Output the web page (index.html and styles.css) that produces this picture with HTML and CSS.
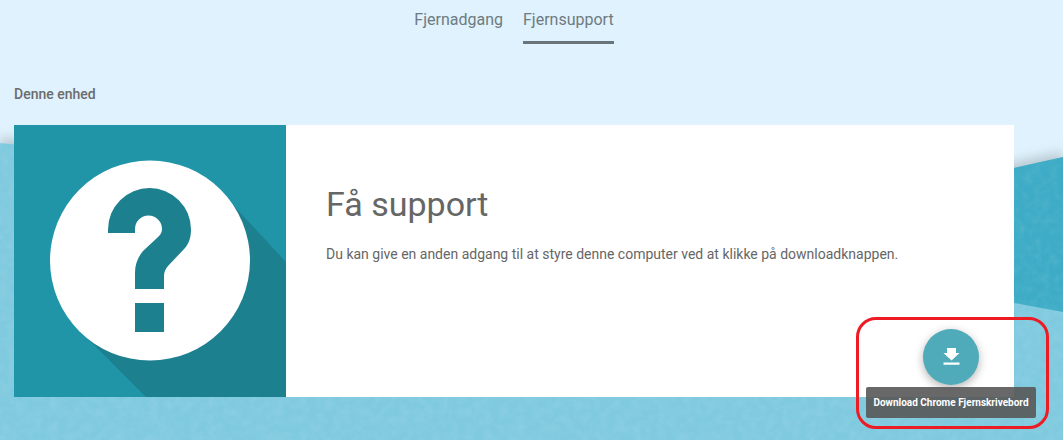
FILE: index.html
```html
<!DOCTYPE html>
<html lang="da">
<head>
<meta charset="utf-8">
<title>Chrome Fjernskrivebord</title>
<link rel="stylesheet" href="styles.css">
</head>
<body>
<svg class="backdrop" viewBox="0 0 1063 440" aria-hidden="true">
  <defs>
    <filter id="blur" x="-5%" y="-30%" width="110%" height="160%"><feGaussianBlur stdDeviation="6"/></filter>
    <filter id="grain" x="0" y="0" width="100%" height="100%">
      <feTurbulence type="fractalNoise" baseFrequency="0.12" numOctaves="4" seed="4"/>
      <feColorMatrix values="0 0 0 0 1  0 0 0 0 1  0 0 0 0 1  1.2 0 0 0 -0.45"/>
    </filter>
    <clipPath id="wave"><path d="M0 143 L286 172 L1014 168 L1063 157 V440 H0Z"/></clipPath>
  </defs>
  <rect width="1063" height="440" fill="#dff2fd"/>
  <path d="M0 138 L286 165 L1014 163 L1063 152 V190 H0Z" fill="#7b8890" opacity=".42" filter="url(#blur)"/>
  <path d="M0 143 L286 172 L1014 168 L1063 157 V440 H0Z" fill="#80cadf"/>
  <path d="M900 170 L1014 168 L1063 157 V312 L1014 303 L900 280Z" fill="#3eacc6"/>
  <g clip-path="url(#wave)"><rect width="1063" height="440" filter="url(#grain)" opacity=".13"/></g>
</svg>

<main class="page">
  <nav class="tabs">
    <a class="tab">Fjernadgang</a>
    <a class="tab tab-active">Fjernsupport</a>
  </nav>

  <h2 class="section-label">Denne enhed</h2>

  <section class="card">
    <div class="card-art">
      <svg class="art-svg" viewBox="14 125 272 272" aria-hidden="true">
        <rect x="14" y="125" width="272" height="272" fill="#2095a8"/>
        <path d="M233 205 L286 262 V397 H146 L87 338Z" fill="#1c808f"/>
        <circle cx="150" cy="260.5" r="100" fill="#fff"/>
        <path d="M108 233 V229.5 A41.5 41.5 0 0 1 191 229.5 C191 238 188.500 244 185 248 L168 266 C165.500 269 164 272 164 276 V289 H135 V273 C135 264 138 257 143 251 L157 238 C160 235 162 233 162 229 A13.500 13.500 0 0 0 135 229 V233Z M135 303 H164 V332 H135Z" fill="#1c808f"/>
      </svg>
    </div>
    <div class="card-body">
      <h1 class="card-title">Få support</h1>
      <p class="card-text">Du kan give en anden adgang til at styre denne computer ved at klikke på downloadknappen.</p>
    </div>
  </section>
</main>

<button class="fab" aria-label="Download Chrome Fjernskrivebord">
  <svg class="fab-icon" viewBox="0 0 24 24" aria-hidden="true"><path d="M8 3h9v5h3.500L12.500 15.500 4.500 8H8zM4.500 17.500h16v2.200h-16z" fill="#fff"/></svg>
</button>
<div class="tooltip">Download Chrome Fjernskrivebord</div>
<div class="callout"></div>
</body>
</html>
```
FILE: styles.css
```css
html, body {
  margin: 0;
  padding: 0;
  height: 440px;
  overflow: hidden;
}
body {
  position: relative;
  font-family: Roboto, "Liberation Sans", sans-serif;
  color: #666;
}
.backdrop {
  position: absolute;
  inset: 0;
  width: 1063px;
  height: 440px;
  display: block;
}
.page {
  position: relative;
  width: 1000px;
  margin-left: 14px;
}
.tabs {
  display: flex;
  justify-content: center;
  gap: 20px;
  height: 44px;
}
.tab {
  box-sizing: border-box;
  height: 44px;
  padding-top: 10px;
  font-size: 16px;
  line-height: 20px;
  color: #6e7b81;
}
.tab-active {
  border-bottom: 3px solid #69757b;
}
.section-label {
  margin: 0;
  padding-top: 42px;
  height: 39px;
  font-size: 14px;
  line-height: 17px;
  font-weight: 500;
  color: #6b6b6b;
}
.card {
  display: flex;
  height: 272px;
  background: #fff;
}
.card-art {
  flex: 0 0 272px;
  height: 272px;
}
.art-svg {
  display: block;
  width: 272px;
  height: 272px;
}
.card-body {
  padding: 57px 40px 0;
}
.card-title {
  margin: 0;
  font-size: 34px;
  line-height: 44px;
  font-weight: 400;
  color: #666;
}
.card-text {
  margin: 18px 0 0;
  font-size: 14px;
  line-height: 20px;
  color: #666;
}
.fab {
  position: absolute;
  left: 923px;
  top: 329px;
  width: 56px;
  height: 56px;
  padding: 0;
  border: 0;
  border-radius: 50%;
  background: #4fabb9;
  box-shadow: 0 3px 10px rgba(0, 0, 0, .3);
  display: flex;
  align-items: center;
  justify-content: center;
}
.fab-icon {
  width: 24px;
  height: 24px;
  display: block;
}
.tooltip {
  position: absolute;
  left: 866px;
  top: 387px;
  width: 170px;
  height: 31px;
  border-radius: 2px;
  background: rgba(88, 88, 88, .9);
  color: #fff;
  font-size: 10px;
  font-weight: 700;
  line-height: 31px;
  text-align: center;
}
.callout {
  position: absolute;
  left: 856px;
  top: 317px;
  width: 187px;
  height: 106px;
  border: 3px solid #ed1c24;
  border-radius: 20px;
}
```
